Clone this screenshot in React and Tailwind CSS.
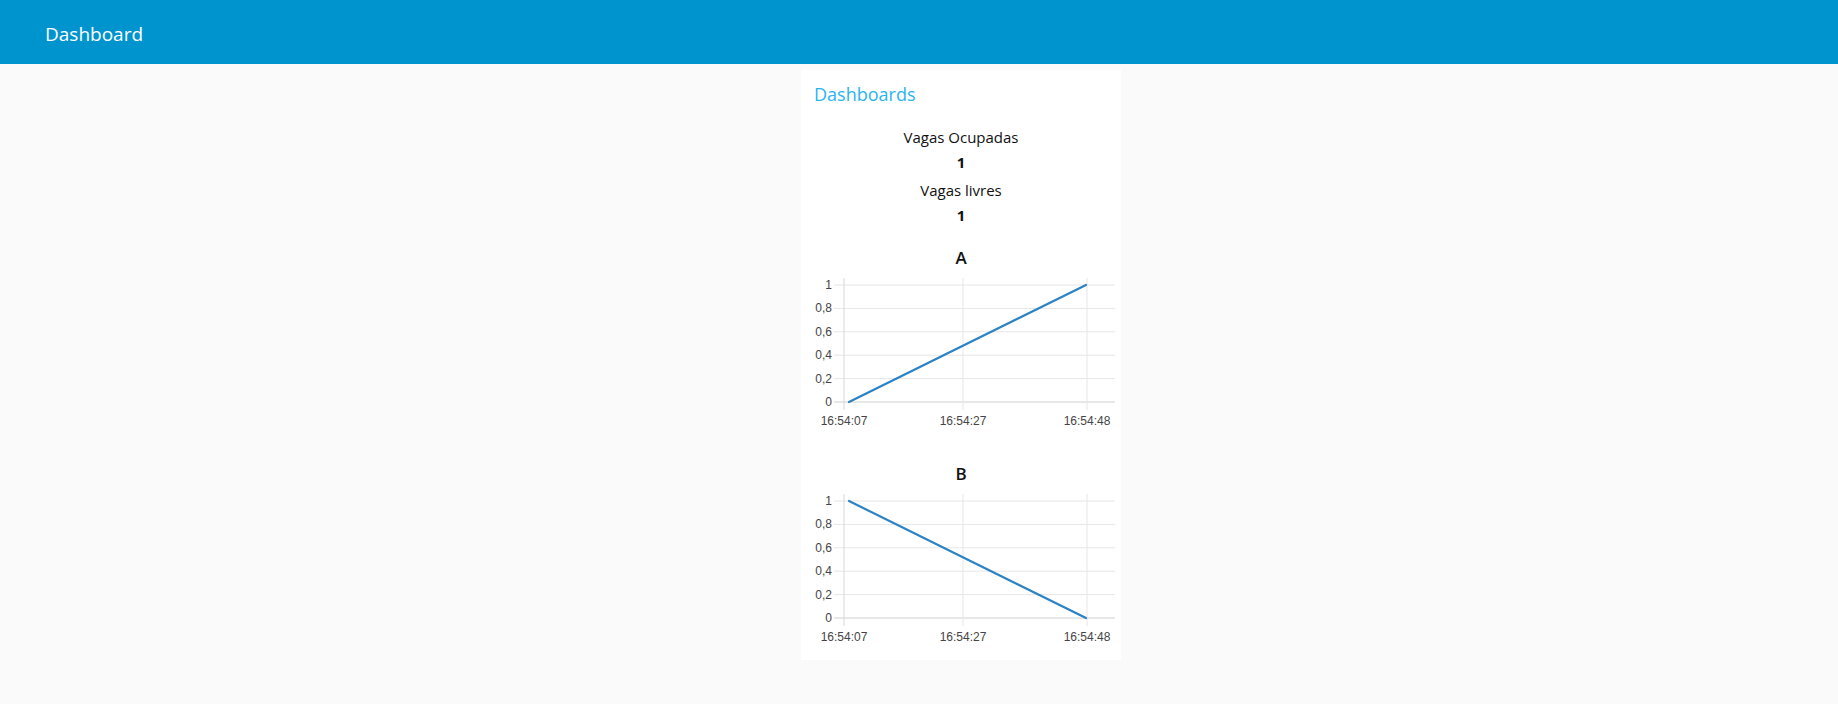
import React from "react";

const yTicks = [
  { label: "1", y: 13 },
  { label: "0,8", y: 36.4 },
  { label: "0,6", y: 59.8 },
  { label: "0,4", y: 83.2 },
  { label: "0,2", y: 106.6 },
  { label: "0", y: 130 },
];

const xTicks = [
  { label: "16:54:07", x: 43 },
  { label: "16:54:27", x: 162 },
  { label: "16:54:48", x: 286 },
];

const LineChart = ({ title, from, to, className }) => {
  return (
    <div className={className}>
      <div className="text-center text-[17px] leading-[20px] font-semibold text-[#111]">{title}</div>
      <svg width="320" height="160" className="mt-[4px] block" style={{ fontFamily: '"Liberation Sans", Arial, sans-serif' }}>
        {yTicks.map((t) => (
          <g key={t.label}>
            <line x1="33" x2="314" y1={t.y} y2={t.y} stroke={t.label === "0" ? "#d0d0d0" : "#e6e6e6"} strokeWidth="1" />
            <text x="31" y={t.y + 4} textAnchor="end" fontSize="12" fill="#444">
              {t.label}
            </text>
          </g>
        ))}
        {xTicks.map((t) => (
          <g key={t.label}>
            <line x1={t.x} x2={t.x} y1="6" y2="138" stroke={t.x === 43 ? "#d6d6d6" : "#e6e6e6"} strokeWidth="1" />
            <text x={t.x} y="153" textAnchor="middle" fontSize="12" fill="#444">
              {t.label}
            </text>
          </g>
        ))}
        <line x1="48" y1={from} x2="285" y2={to} stroke="#2b82c4" strokeWidth="2.2" strokeLinecap="round" />
      </svg>
    </div>
  );
};

const App = () => {
  return (
    <div className="min-h-[704px] bg-[#fafafa]" style={{ fontFamily: '"Open Sans", "Noto Sans", sans-serif' }}>
      <header className="h-[64px] bg-[#0094ce] flex items-center pl-[45px] pt-[3px]">
        <h1 className="text-[19px] leading-[28px] text-white">Dashboard</h1>
      </header>

      <main className="flex justify-center pl-[84px] pt-[6px]">
        <div className="w-[320px] bg-white pt-[12px] pb-[12px]">
          <h2 className="pl-[13px] text-[18px] leading-[24px] font-medium text-[#2bb4f0]">Dashboards</h2>

          <div className="text-center text-[15px] leading-[20px] text-[#111]">
            <p className="mt-[21px]">Vagas Ocupadas</p>
            <p className="mt-[5px] font-bold">1</p>
            <p className="mt-[8px]">Vagas livres</p>
            <p className="mt-[5px] font-bold">1</p>
          </div>

          <LineChart className="mt-[23px]" title="A" from={130} to={13} />
          <LineChart className="mt-[32px]" title="B" from={13} to={130} />
        </div>
      </main>
    </div>
  );
};

export default App;
